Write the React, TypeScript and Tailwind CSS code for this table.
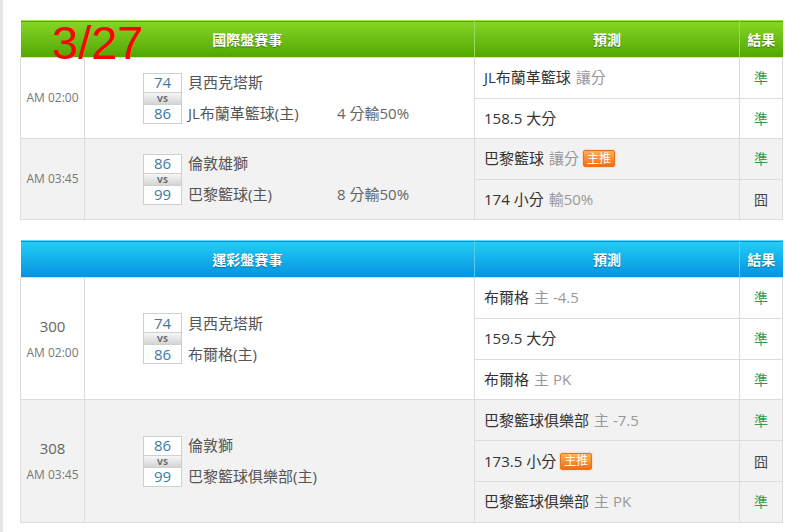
import React from "react";

type Pred = { main: string; sub?: string; badge?: boolean; result: "準" | "囧" };
type Match = {
  code?: string;
  time: string;
  s1: number;
  s2: number;
  t1: string;
  t2: string;
  hc?: string;
  preds: Pred[];
};

const FONT = { fontFamily: '"Open Sans", "Noto Sans CJK TC", sans-serif' };

function Badge() {
  return (
    <span className="ml-[4px] inline-flex h-[17px] items-center rounded-[2px] border border-[#e8741c] bg-gradient-to-b from-[#ffae55] to-[#f26c12] px-[3px] text-[12px] leading-none text-white shadow-[0_0_2px_#ffb070]">
      主推
    </span>
  );
}

function ScoreBox({ m }: { m: Match }) {
  return (
    <div className="flex w-[39px] flex-col">
      <div className="flex h-[20px] items-center justify-center border border-[#cfcfcf] bg-white text-[15px] leading-none text-[#3d7aa3]">
        {m.s1}
      </div>
      <div className="flex h-[11px] items-center justify-center overflow-hidden border-x border-[#cfcfcf] bg-gradient-to-b from-[#f7f7f7] to-[#d4d4d4] text-[9px] font-bold leading-[9px] text-[#666]">
        VS
      </div>
      <div className="flex h-[20px] items-center justify-center border border-[#cfcfcf] bg-white text-[15px] leading-none text-[#3d7aa3]">
        {m.s2}
      </div>
    </div>
  );
}

function Table({
  title,
  theme,
  matches,
  rowH,
  children,
}: {
  title: string;
  theme: "green" | "blue";
  matches: Match[];
  rowH: string;
  children?: React.ReactNode;
}) {
  const head =
    theme === "green"
      ? "bg-gradient-to-b from-[#86d524] to-[#4fa600] border-t border-t-[#a6e35a]"
      : "bg-gradient-to-b from-[#22cdf4] to-[#0891e0] border-t border-t-[#5fdcf8]";
  const sep = theme === "green" ? "border-l border-l-[#9ada55]" : "border-l border-l-[#55cdf3]";
  const th = "text-center text-[14px] font-bold text-white [text-shadow:0_1px_1px_rgba(0,0,0,0.35)]";
  return (
    <div className="relative w-[762px]">
      {children}
      <table className="w-[762px] table-fixed border-collapse" style={FONT}>
        <colgroup>
          <col className="w-[64px]" />
          <col className="w-[390px]" />
          <col className="w-[265px]" />
          <col className="w-[43px]" />
        </colgroup>
        <thead>
          <tr className={`h-[37px] ${head}`}>
            <th colSpan={2} className={th}>
              {title}
            </th>
            <th className={`${sep} ${th}`}>預測</th>
            <th className={`${sep} ${th}`}>結果</th>
          </tr>
        </thead>
        <tbody>
          {matches.map((m, mi) => {
            const bg = mi % 2 === 1 ? "bg-[#f2f2f2]" : "bg-white";
            return m.preds.map((p, pi) => (
              <tr key={`${mi}-${pi}`} className={`${rowH} ${bg}`}>
                {pi === 0 && (
                  <>
                    <td
                      rowSpan={m.preds.length}
                      className="border border-[#dcdcdc] text-center align-middle"
                    >
                      {m.code && (
                        <div className="mb-[13px] text-[15px] leading-none text-[#666]">{m.code}</div>
                      )}
                      <div className="text-[12px] leading-none text-[#777]">{m.time}</div>
                    </td>
                    <td rowSpan={m.preds.length} className="border border-[#dcdcdc] align-middle">
                      <div className="flex items-start pl-[58px]">
                        <ScoreBox m={m} />
                        <div className="ml-[6px] flex flex-col text-[15px] text-[#555]">
                          <div className="flex h-[20px] items-center leading-none">{m.t1}</div>
                          <div className="h-[11px]" />
                          <div className="flex h-[20px] items-center leading-none">
                            <span className="w-[149px]">{m.t2}</span>
                            {m.hc && <span className="text-[#666]">{m.hc}</span>}
                          </div>
                        </div>
                      </div>
                    </td>
                  </>
                )}
                <td className="border border-[#dcdcdc] pl-[9px] align-middle text-[15px] text-[#333]">
                  <div className="flex items-center leading-none">
                    <span>{p.main}</span>
                    {p.sub && <span className="ml-[5px] text-[#999]">{p.sub}</span>}
                    {p.badge && <Badge />}
                  </div>
                </td>
                <td
                  className={`border border-[#dcdcdc] text-center align-middle text-[14px] ${
                    p.result === "準" ? "text-[#2f9a4e]" : "text-[#444]"
                  }`}
                >
                  {p.result}
                </td>
              </tr>
            ));
          })}
        </tbody>
      </table>
    </div>
  );
}

const intl: Match[] = [
  {
    time: "AM 02:00",
    s1: 74,
    s2: 86,
    t1: "貝西克塔斯",
    t2: "JL布蘭革籃球(主)",
    hc: "4 分輸50%",
    preds: [
      { main: "JL布蘭革籃球", sub: "讓分", result: "準" },
      { main: "158.5 大分", result: "準" },
    ],
  },
  {
    time: "AM 03:45",
    s1: 86,
    s2: 99,
    t1: "倫敦雄獅",
    t2: "巴黎籃球(主)",
    hc: "8 分輸50%",
    preds: [
      { main: "巴黎籃球", sub: "讓分", badge: true, result: "準" },
      { main: "174 小分", sub: "輸50%", result: "囧" },
    ],
  },
];

const lottery: Match[] = [
  {
    code: "300",
    time: "AM 02:00",
    s1: 74,
    s2: 86,
    t1: "貝西克塔斯",
    t2: "布爾格(主)",
    preds: [
      { main: "布爾格", sub: "主 -4.5", result: "準" },
      { main: "159.5 大分", result: "準" },
      { main: "布爾格", sub: "主 PK", result: "準" },
    ],
  },
  {
    code: "308",
    time: "AM 03:45",
    s1: 86,
    s2: 99,
    t1: "倫敦獅",
    t2: "巴黎籃球俱樂部(主)",
    preds: [
      { main: "巴黎籃球俱樂部", sub: "主 -7.5", result: "準" },
      { main: "173.5 小分", badge: true, result: "囧" },
      { main: "巴黎籃球俱樂部", sub: "主 PK", result: "準" },
    ],
  },
];

export default function App() {
  return (
    <div className="min-h-[532px] w-[796px] border-l-[3px] border-l-[#e6e6e6] bg-white">
      <div className="flex flex-col gap-[20px] pl-[17px] pt-[20px]">
        <Table title="國際盤賽事" theme="green" matches={intl} rowH="h-[40.5px]">
          <div
            className="pointer-events-none absolute left-[32px] top-[-1px] z-10 text-[47px] leading-[47px] text-[#ff0000]"
            style={{ fontFamily: '"Liberation Sans", Arial, sans-serif' }}
          >
            3/27
          </div>
        </Table>
        <Table title="運彩盤賽事" theme="blue" matches={lottery} rowH="h-[40.8px]" />
      </div>
    </div>
  );
}
